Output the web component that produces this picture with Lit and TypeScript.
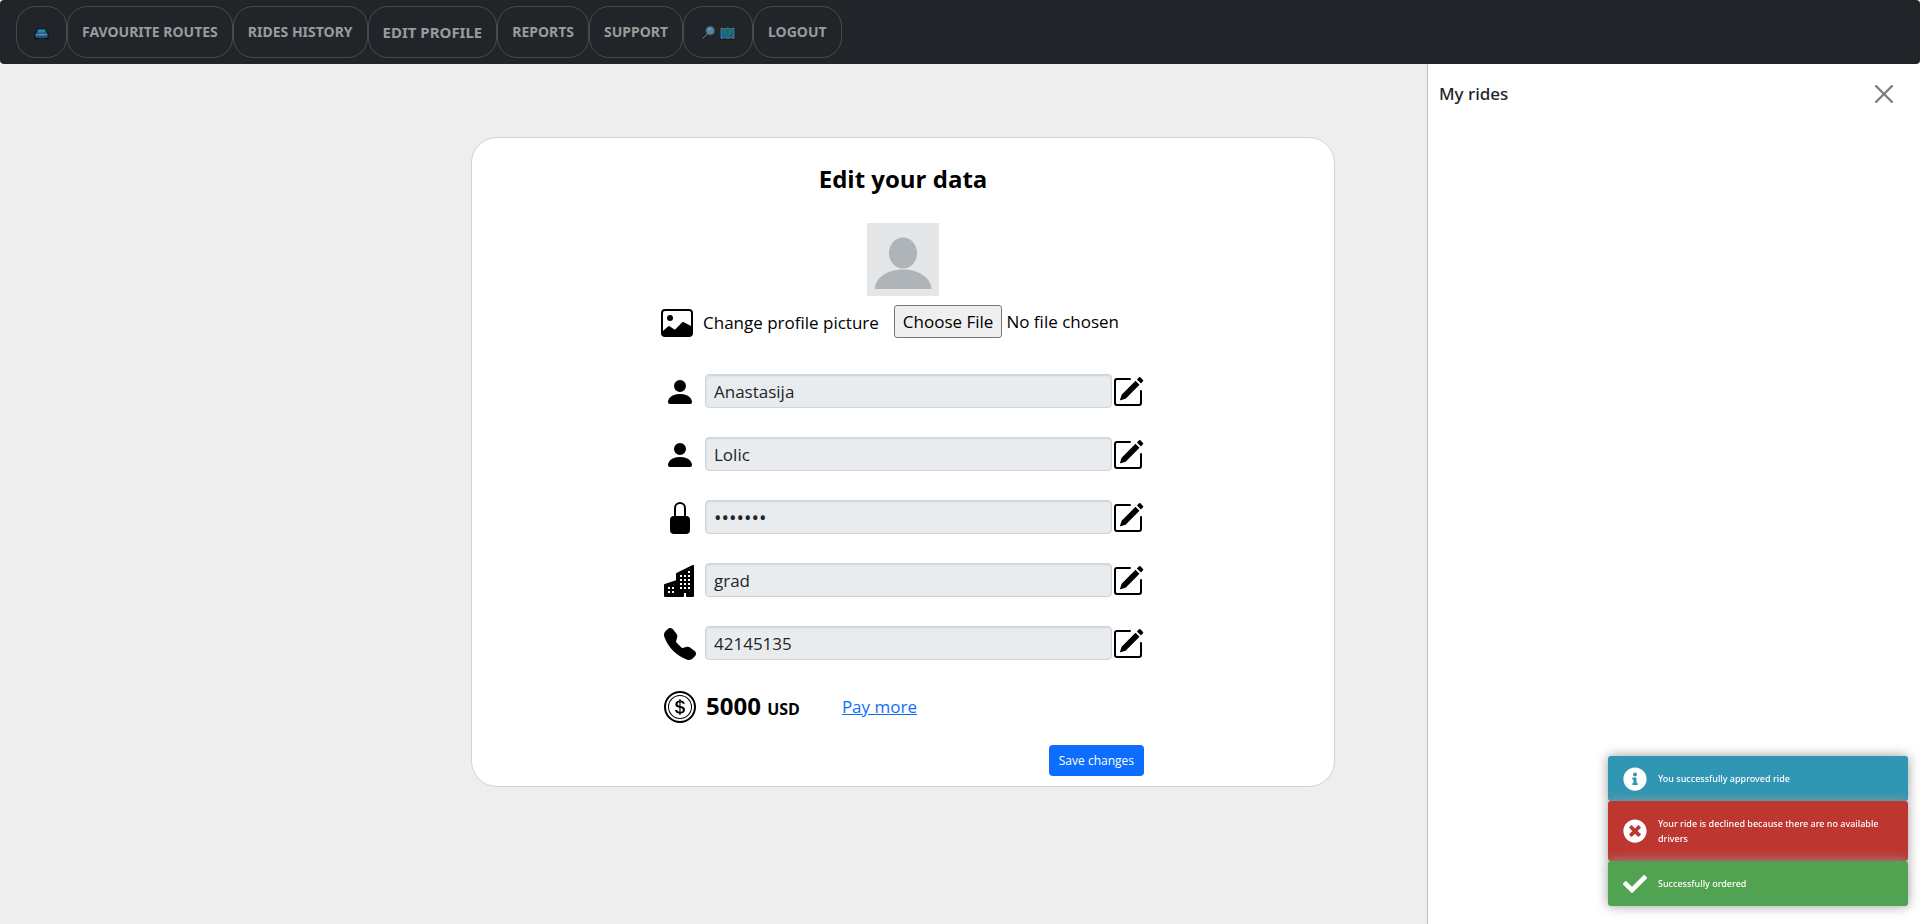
import { LitElement, html, css, svg, nothing } from "lit";
import { customElement, property } from "lit/decorators.js";

const icons: Record<string, unknown> = {
  image: svg`<path d="M6.002 5.5a1.5 1.5 0 1 1-3 0 1.5 1.5 0 0 1 3 0z"/><path d="M2.002 1a2 2 0 0 0-2 2v10a2 2 0 0 0 2 2h12a2 2 0 0 0 2-2V3a2 2 0 0 0-2-2h-12zm12 1a1 1 0 0 1 1 1v6.5l-3.777-1.947a.5.5 0 0 0-.577.093l-3.71 3.71-2.66-1.772a.5.5 0 0 0-.63.062L1.002 12V3a1 1 0 0 1 1-1h12z"/>`,
  person: svg`<path d="M3 14s-1 0-1-1 1-4 6-4 6 3 6 4-1 1-1 1H3zm5-6a3 3 0 1 0 0-6 3 3 0 0 0 0 6z"/>`,
  lock: svg`<path d="M8 1a2 2 0 0 1 2 2v4H6V3a2 2 0 0 1 2-2zm3 6V3a3 3 0 0 0-6 0v4a2 2 0 0 0-2 2v5a2 2 0 0 0 2 2h6a2 2 0 0 0 2-2V9a2 2 0 0 0-2-2z"/>`,
  buildings: svg`<path d="M15 .5a.5.5 0 0 0-.724-.447l-8 4A.5.5 0 0 0 6 4.5v3.14L.342 9.526A.5.5 0 0 0 0 10v5.5a.5.5 0 0 0 .5.5h9a.5.5 0 0 0 .5-.5V14h1v1.5a.5.5 0 0 0 .5.5h3a.5.5 0 0 0 .5-.5V.5ZM2 11h1v1H2v-1Zm2 0h1v1H4v-1Zm-1 2v1H2v-1h1Zm1 0h1v1H4v-1Zm9-10v1h-1V3h1ZM8 5h1v1H8V5Zm1 2v1H8V7h1ZM8 9h1v1H8V9Zm2 0h1v1h-1V9Zm-1 2v1H8v-1h1Zm1 0h1v1h-1v-1Zm3-2v1h-1V9h1Zm-1 2h1v1h-1v-1Zm-2-4h1v1h-1V7Zm3 0v1h-1V7h1Zm-2-2v1h-1V5h1Zm1 0h1v1h-1V5Z"/>`,
  phone: svg`<path d="M1.885.511a1.745 1.745 0 0 1 2.61.163L6.29 2.98c.329.423.445.974.315 1.494l-.547 2.19a.678.678 0 0 0 .178.643l2.457 2.457a.678.678 0 0 0 .644.178l2.189-.547a1.745 1.745 0 0 1 1.494.315l2.306 1.794c.829.645.905 1.87.163 2.611l-1.034 1.034c-.74.74-1.846 1.065-2.877.702a18.634 18.634 0 0 1-7.01-4.42 18.634 18.634 0 0 1-4.42-7.009c-.362-1.03-.037-2.137.703-2.877L1.885.511z"/>`,
  pencil: svg`<path d="M15.502 1.94a.5.5 0 0 1 0 .706L14.459 3.69l-2-2L13.502.646a.5.5 0 0 1 .707 0l1.293 1.293zm-1.75 2.456-2-2L4.939 9.21a.5.5 0 0 0-.121.196l-.805 2.414a.25.25 0 0 0 .316.316l2.414-.805a.5.5 0 0 0 .196-.12l6.813-6.814z"/><path fill-rule="evenodd" d="M1 13.5A1.5 1.5 0 0 0 2.5 15h11a1.5 1.5 0 0 0 1.5-1.5v-6a.5.5 0 0 0-1 0v6a.5.5 0 0 1-.5.5h-11a.5.5 0 0 1-.5-.5v-11a.5.5 0 0 1 .5-.5H9a.5.5 0 0 0 0-1H2.5A1.5 1.5 0 0 0 1 2.5v11z"/>`,
  coin: svg`<path d="M5.5 9.511c.076.954.83 1.697 2.182 1.785V12h.6v-.709c1.4-.098 2.218-.846 2.218-1.932 0-.987-.626-1.496-1.745-1.76l-.473-.112V5.57c.6.068.982.396 1.074.85h1.052c-.076-.919-.864-1.638-2.126-1.716V4h-.6v.719c-1.195.117-2.01.836-2.01 1.853 0 .9.606 1.472 1.613 1.707l.397.098v2.034c-.615-.093-1.022-.43-1.114-.9H5.5zm2.177-2.166c-.59-.137-.91-.416-.91-.836 0-.47.345-.822.915-.925v1.76h-.005zm.692 1.193c.717.166 1.048.435 1.048.91 0 .542-.412.914-1.135.982V8.518l.087.02z"/><path d="M8 15A7 7 0 1 1 8 1a7 7 0 0 1 0 14zm0 1A8 8 0 1 0 8 0a8 8 0 0 0 0 16z"/><path d="M8 13.5a5.5 5.5 0 1 1 0-11 5.5 5.5 0 0 1 0 11zm0 .5A6 6 0 1 0 8 2a6 6 0 0 0 0 12z"/>`,
  close: svg`<path d="M.293.293a1 1 0 0 1 1.414 0L8 6.586 14.293.293a1 1 0 1 1 1.414 1.414L9.414 8l6.293 6.293a1 1 0 0 1-1.414 1.414L8 9.414l-6.293 6.293a1 1 0 0 1-1.414-1.414L6.586 8 .293 1.707a1 1 0 0 1 0-1.414z"/>`,
};

const toastIcons: Record<string, string> = {
  info: "M256 8C119.043 8 8 119.083 8 256c0 136.997 111.043 248 248 248s248-111.003 248-248C504 119.083 392.957 8 256 8zm0 110c23.196 0 42 18.804 42 42s-18.804 42-42 42-42-18.804-42-42 18.804-42 42-42zm56 254c0 6.627-5.373 12-12 12h-88c-6.627 0-12-5.373-12-12v-24c0-6.627 5.373-12 12-12h12v-64h-12c-6.627 0-12-5.373-12-12v-24c0-6.627 5.373-12 12-12h64c6.627 0 12 5.373 12 12v100h12c6.627 0 12 5.373 12 12v24z",
  error: "M256 8C119 8 8 119 8 256s111 248 248 248 248-111 248-248S393 8 256 8zm121.6 313.1c4.7 4.7 4.7 12.3 0 17L338 377.6c-4.7 4.7-12.3 4.7-17 0L256 312l-65.1 65.6c-4.7 4.7-12.3 4.7-17 0L134.4 338c-4.7-4.7-4.7-12.3 0-17l65.6-65-65.6-65.1c-4.7-4.7-4.7-12.3 0-17l39.6-39.6c4.7-4.7 12.3-4.7 17 0l65 65.7 65.1-65.6c4.7-4.7 12.3-4.7 17 0l39.6 39.6c4.7 4.7 4.7 12.3 0 17L312 256l65.6 65.1z",
  success: "M173.898 439.404l-166.4-166.4c-9.997-9.997-9.997-26.206 0-36.204l36.203-36.204c9.997-9.998 26.207-9.998 36.204 0L192 312.69 432.095 72.596c9.997-9.997 26.207-9.997 36.204 0l36.203 36.204c9.997 9.997 9.997 26.206 0 36.204l-294.4 294.401c-9.998 9.997-26.207 9.997-36.204-.001z",
};

@customElement("ui-icon")
export class UiIcon extends LitElement {
  @property() name = "";

  static styles = css`
    :host { display: block; width: 32px; height: 32px; flex: none; }
    svg { display: block; width: 100%; height: 100%; }
  `;

  render() {
    return html`<svg viewBox="0 0 16 16" fill="currentColor" aria-hidden="true">${icons[this.name]}</svg>`;
  }
}

const carGlyph = html`<svg class="glyph" viewBox="0 0 16 16" aria-hidden="true">
  <path d="M3.500 3.500h9l1.500 4 1.500 1v7h-4v-1.500h-7v1.500h-4v-7l1.500-1z" fill="#0a1219" />
  <path d="M4.200 4.500h7.600l1.200 4H3z" fill="#2b86a3" />
  <path d="M2.500 8h11l1 1v4.500h-13V9z" fill="#155d96" />
  <path d="M4.500 9.500h7V11h-7z" fill="#858b90" />
  <path d="M2 9.500h2V11H2zM12 9.500h2V11h-2z" fill="#9c8b3a" />
</svg>`;

const searchGlyph = html`<svg class="glyph" viewBox="0 0 16 16" aria-hidden="true">
  <path d="M7 9.500L2 14.200" stroke="#14181b" stroke-width="3.200" stroke-linecap="round" />
  <path d="M7 9.500L2 14.200" stroke="#56606a" stroke-width="1.600" stroke-linecap="round" />
  <circle cx="9.800" cy="6" r="4.600" fill="#5a86a3" stroke="#3f4b55" stroke-width="1.200" />
  <path d="M7.500 5.500a3 3 0 0 1 3-2" stroke="#86a9bd" fill="none" />
</svg>`;

const mapGlyph = html`<svg class="glyph" viewBox="0 0 16 16" aria-hidden="true">
  <path d="M0 2l4 1 4-1 4 1 4-1v14l-4-1-4 1-4-1-4 1z" fill="#0d1417" />
  <path d="M1 3l3.500 1L8 3l3.500 1L15 3v11.500l-3.500-1-3.500 1-3.500-1-3.500 1z" fill="#15609a" stroke="#75898c" stroke-width=".8" />
  <path d="M2.500 5.500l3-.5 2 2-1.500 3-2-2zM8 6l5-1.500.5 3-2.500 2-1.500 2.500-2-1.500 1.500-2z" fill="#1d7d42" />
</svg>`;

interface NavItem {
  label: string;
  content: unknown;
  kind: string;
}

const navItems: NavItem[] = [
  { label: "Home", content: carGlyph, kind: "" },
  { label: "", content: "FAVOURITE ROUTES", kind: "" },
  { label: "", content: "RIDES HISTORY", kind: "" },
  { label: "", content: "EDIT PROFILE", kind: "large" },
  { label: "", content: "REPORTS", kind: "" },
  { label: "", content: "SUPPORT", kind: "" },
  { label: "Search map", content: html`${searchGlyph}${mapGlyph}`, kind: "" },
  { label: "", content: "LOGOUT", kind: "" },
];

@customElement("nav-bar")
export class NavBar extends LitElement {
  static styles = css`
    :host { display: block; }
    nav {
      display: flex;
      padding: 6px 16px;
      background: #212529;
      border-radius: 4px;
    }
    button {
      display: flex;
      align-items: center;
      justify-content: center;
      gap: 4px;
      height: 52px;
      min-width: 51px;
      padding: 0 14px;
      border: 1px solid #4f474c;
      border-radius: 20px;
      background: none;
      color: #999b9c;
      font: 700 14px/20px "Noto Sans", sans-serif;
      white-space: nowrap;
    }
    button.icons { padding: 0 17px; }
    button.large { font-size: 15px; }
    .glyph { width: 15px; height: 15px; display: block; }
  `;

  render() {
    return html`<nav>
      ${navItems.map(
        (item) => html`<button type="button" class="${item.label ? "icons" : item.kind}" aria-label=${item.label || nothing}>${item.content}</button>`
      )}
    </nav>`;
  }
}

const fields = [
  { id: "first-name", label: "First name", icon: "person", value: "Anastasija", type: "text" },
  { id: "last-name", label: "Last name", icon: "person", value: "Lolic", type: "text" },
  { id: "password", label: "Password", icon: "lock", value: "secret1", type: "password" },
  { id: "city", label: "City", icon: "buildings", value: "grad", type: "text" },
  { id: "phone", label: "Phone", icon: "phone", value: "42145135", type: "text" },
];

@customElement("profile-form")
export class ProfileForm extends LitElement {
  static styles = css`
    :host {
      display: block;
      box-sizing: border-box;
      padding: 23px 24px 10px;
      background: #fff;
      border: 1px solid #d3d3d3;
      border-radius: 26px;
      color: #000;
      font: 400 17px/24px "Open Sans", sans-serif;
    }
    h1 { margin: 0 0 26px; font-size: 24px; line-height: 36px; font-weight: 700; text-align: center; }
    .avatar { display: block; width: 72px; height: 73px; margin: 0 auto 9px; }
    form { display: block; box-sizing: border-box; width: 484px; max-width: 100%; margin: 0 auto; padding-right: 1px; }
    .picture { display: flex; align-items: flex-start; margin-bottom: 35px; height: 34px; }
    .picture ui-icon { margin-top: 2px; }
    .picture label { margin: 0 15px 0 10px; line-height: 36px; white-space: nowrap; }
    .picture input { flex: 1; min-width: 0; font: inherit; }
    .picture input::file-selector-button {
      box-sizing: border-box;
      height: 33px;
      padding: 0 8px;
      margin-right: 4px;
      border: 1px solid #767676;
      border-radius: 3px;
      background: #efefef;
      color: #000;
      font: inherit;
    }
    .field {
      display: grid;
      grid-template-columns: 32px 1fr 32px;
      align-items: start;
      height: 34px;
      margin: 0 0 29px 3px;
    }
    .field input {
      box-sizing: border-box;
      height: 34px;
      min-width: 0;
      margin: 0 0 0 9px;
      padding: 0 8px;
      border: 1px solid #ced4da;
      border-radius: 4px;
      background: #e9ecef;
      box-shadow: inset 0 1px 2px #0000001a;
      color: #212529;
      font: inherit;
    }
    .field input[type="password"] { font-size: 20px; }
    .field label, .edit { padding-top: 2px; }
    .edit { padding: 2px 0 0; border: 0; background: none; color: #000; }
    .balance { display: flex; align-items: center; margin: 0 0 20px 3px; height: 36px; }
    .balance strong { margin-left: 10px; font-size: 24px; }
    .balance small { font-size: 16px; }
    .balance a { margin-left: 42px; color: #0d6efd; }
    .save {
      display: block;
      height: 31px;
      margin-left: auto;
      padding: 0 10px;
      border: 0;
      border-radius: 4px;
      background: #0d6efd;
      color: #fff;
      font: 400 12px/20px "Open Sans", sans-serif;
    }
  `;

  render() {
    return html`
      <h1>Edit your data</h1>
      <svg class="avatar" viewBox="0 0 72 73" role="img" aria-label="Profile picture">
        <path fill="#e4e6e8" d="M0 0h72v73H0z" />
        <ellipse cx="36" cy="30" rx="14" ry="15.500" fill="#aeb4b8" />
        <path fill="#aeb4b8" d="M8 66c0-11 12-19.500 28-19.500S64 55 64.500 66z" />
      </svg>
      <form>
        <div class="picture">
          <ui-icon name="image"></ui-icon>
          <label for="picture">Change profile picture</label>
          <input id="picture" type="file" />
        </div>
        ${fields.map(
          (f) => html`<div class="field">
            <label for=${f.id} aria-label=${f.label}><ui-icon name=${f.icon}></ui-icon></label>
            <input id=${f.id} type=${f.type} .value=${f.value} readonly autocomplete="off" />
            <button class="edit" type="button" aria-label="Edit ${f.label}"><ui-icon name="pencil"></ui-icon></button>
          </div>`
        )}
        <div class="balance">
          <ui-icon name="coin"></ui-icon>
          <strong>5000 <small>USD</small></strong>
          <a href="#pay">Pay more</a>
        </div>
        <button class="save" type="button">Save changes</button>
      </form>
    `;
  }
}

@customElement("rides-panel")
export class RidesPanel extends LitElement {
  static styles = css`
    :host {
      display: block;
      box-sizing: border-box;
      border-left: 1px solid #bcbcbc;
      background: #fff;
      color: #212529;
      font-family: "Noto Sans", sans-serif;
    }
    header { display: flex; align-items: center; justify-content: space-between; padding: 16px 27px 16px 11px; }
    h2 { margin: 0; font-size: 17px; line-height: 28px; font-weight: 500; }
    button { padding: 0; border: 0; background: none; color: #000; opacity: 0.5; }
    ui-icon { width: 18px; height: 18px; }
  `;

  render() {
    return html`<header>
      <h2>My rides</h2>
      <button type="button" aria-label="Close"><ui-icon name="close"></ui-icon></button>
    </header>`;
  }
}

const toasts = [
  { kind: "info", text: "You successfully approved ride" },
  { kind: "error", text: "Your ride is declined because there are no available drivers" },
  { kind: "success", text: "Successfully ordered" },
];

@customElement("toast-stack")
export class ToastStack extends LitElement {
  static styles = css`
    :host { position: fixed; right: 12px; bottom: 18px; width: 300px; font: 500 9px/15px "Noto Sans", sans-serif; }
    .toast {
      display: flex;
      align-items: center;
      gap: 11px;
      padding: 15px;
      border-radius: 3px;
      box-shadow: 0 0 12px #999;
      color: #fff;
    }
    .toast svg { flex: none; width: 24px; height: 24px; margin: -5px 0; fill: #fff; }
    .info { background: #2f96b4; }
    .error { background: #bd362f; }
    .success { background: #51a351; }
  `;

  render() {
    return toasts.map(
      (t) => html`<div class="toast ${t.kind}" role="status">
        <svg viewBox="0 0 512 512" aria-hidden="true"><path d=${toastIcons[t.kind]} /></svg>
        <span>${t.text}</span>
      </div>`
    );
  }
}

@customElement("app-root")
export class AppRoot extends LitElement {
  static styles = css`
    :host { display: flex; flex-direction: column; min-height: 100vh; background: #fff; }
    .body { flex: 1; display: flex; }
    main { flex: 1; display: flex; align-items: flex-start; justify-content: flex-end; padding: 73px 92px 24px 24px; background: #eee; }
    profile-form { width: 45vw; }
    rides-panel { width: 493px; flex: none; }
  `;

  render() {
    return html`
      <nav-bar></nav-bar>
      <div class="body">
        <main><profile-form></profile-form></main>
        <rides-panel></rides-panel>
      </div>
      <toast-stack></toast-stack>
    `;
  }
}
